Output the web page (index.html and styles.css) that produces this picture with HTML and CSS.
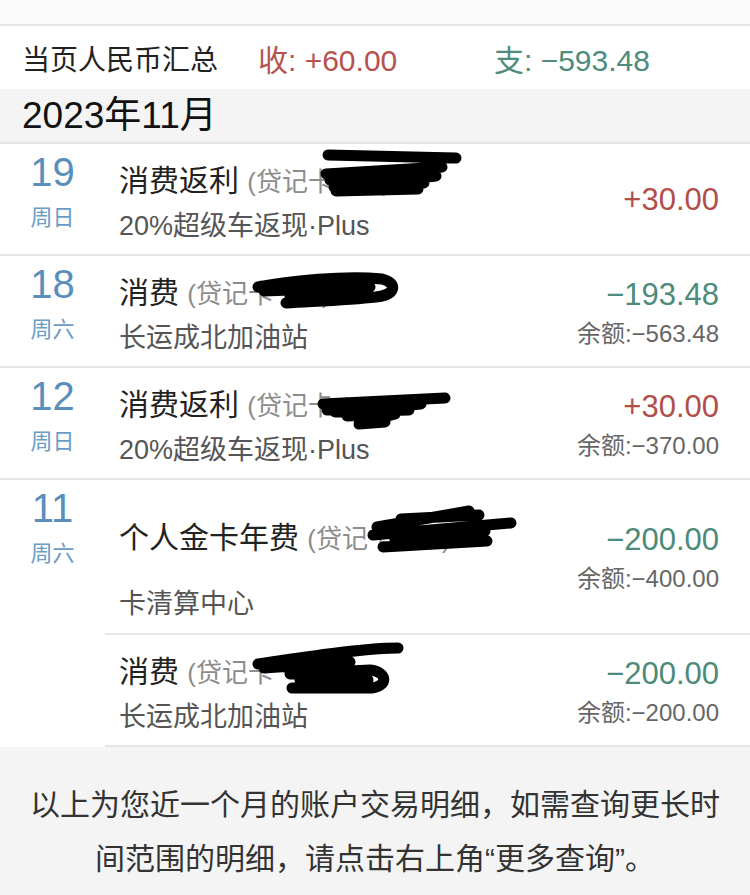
FILE: index.html
```html
<!DOCTYPE html>
<html lang="zh-CN">
<head>
  <meta charset="UTF-8" />
  <meta name="viewport" content="width=device-width, initial-scale=1.0" />
  <title>账户明细</title>
  <link rel="stylesheet" href="styles.css">
</head>
<body>
  <div class="top-strip"></div>

  <div class="summary">
    <span class="summary-label">当页人民币汇总</span>
    <span class="summary-in">收: +60.00</span>
    <span class="summary-out">支: −593.48</span>
  </div>

  <div class="month">2023年11月</div>

  <div class="day-group">
    <div class="date">
      <div class="date-num">19</div>
      <div class="date-week">周日</div>
    </div>
    <div class="entries">
      <div class="entry">
        <div class="entry-main">
          <div class="entry-title">消费返利 <span class="card">(贷记卡 ****)</span>
            <svg class="scribble scribble-1" width="142" height="50" viewBox="0 0 142 50">
              <path d="M8 6 L136 9 M6 25 L122 18 L10 31 L116 27 L14 38 L104 34 L16 42 L98 40" />
            </svg>
          </div>
          <div class="entry-sub">20%超级车返现·Plus</div>
        </div>
        <div class="entry-side solo">
          <div class="amount plus">+30.00</div>
        </div>
      </div>
    </div>
  </div>

  <div class="day-group">
    <div class="date">
      <div class="date-num">18</div>
      <div class="date-week">周六</div>
    </div>
    <div class="entries">
      <div class="entry">
        <div class="entry-main">
          <div class="entry-title">消费 <span class="card">(贷记卡 ****)</span>
            <svg class="scribble scribble-2" width="150" height="42" viewBox="0 0 150 42">
              <path d="M8 20 C40 14, 95 8, 132 12 C148 16, 146 28, 126 30 C100 33, 70 34, 36 36 M14 24 L120 20 L40 30 L110 26" />
            </svg>
          </div>
          <div class="entry-sub">长运成北加油站</div>
        </div>
        <div class="entry-side">
          <div class="amount minus">−193.48</div>
          <div class="balance">余额:−563.48</div>
        </div>
      </div>
    </div>
  </div>

  <div class="day-group">
    <div class="date">
      <div class="date-num">12</div>
      <div class="date-week">周日</div>
    </div>
    <div class="entries">
      <div class="entry">
        <div class="entry-main">
          <div class="entry-title">消费返利 <span class="card">(贷记卡 ****)</span>
            <svg class="scribble scribble-3" width="140" height="40" viewBox="0 0 140 40">
              <path d="M8 14 L130 8 M12 20 L106 14 L20 22 L94 20 M32 26 L80 24 L44 34 L70 32" />
            </svg>
          </div>
          <div class="entry-sub">20%超级车返现·Plus</div>
        </div>
        <div class="entry-side">
          <div class="amount plus">+30.00</div>
          <div class="balance">余额:−370.00</div>
        </div>
      </div>
    </div>
  </div>

  <div class="day-group last">
    <div class="date">
      <div class="date-num">11</div>
      <div class="date-week">周六</div>
    </div>
    <div class="entries">
      <div class="entry tall">
        <div class="entry-main">
          <div class="entry-title">个人金卡年费 <span class="card">(贷记卡 ****)</span>
            <svg class="scribble scribble-4" width="156" height="52" viewBox="0 0 156 52">
              <path d="M12 24 L104 8 M36 16 L114 12 M8 32 L146 20 M24 30 L120 28 L30 38 L110 36 M18 44 L122 38" />
            </svg>
          </div>
          <div class="entry-sub">卡清算中心</div>
        </div>
        <div class="entry-side">
          <div class="amount minus">−200.00</div>
          <div class="balance">余额:−400.00</div>
        </div>
      </div>
      <div class="entry">
        <div class="entry-main">
          <div class="entry-title">消费 <span class="card">(贷记卡 ****)</span>
            <svg class="scribble scribble-5" width="160" height="56" viewBox="0 0 160 56">
              <path d="M8 24 C50 18, 110 8, 148 8 M14 28 L100 22 M40 34 L120 30 C138 32, 138 46, 122 48 L42 48 M50 40 L118 40" />
            </svg>
          </div>
          <div class="entry-sub">长运成北加油站</div>
        </div>
        <div class="entry-side">
          <div class="amount minus">−200.00</div>
          <div class="balance">余额:−200.00</div>
        </div>
      </div>
    </div>
  </div>

  <div class="footer">
    以上为您近一个月的账户交易明细，如需查询更长时<br>间范围的明细，请点击右上角“更多查询”。
  </div>
</body>
</html>
```

FILE: styles.css
```css
body {
  margin: 0;
  padding: 0;
  background-color: #ffffff;
  font-family: "Liberation Sans", "Noto Sans CJK SC", sans-serif;
  color: #222222;
  height: 895px;
  overflow: hidden;
}

.top-strip {
  height: 24px;
  background-color: #fafafa;
  border-bottom: 2px solid #e6e6e6;
}

.summary {
  height: 63px;
  display: grid;
  grid-template-columns: 236px 236px auto;
  align-items: center;
  padding-left: 22px;
  font-size: 28px;
}

.summary-in {
  color: #b6524e;
  font-size: 30px;
}

.summary-out {
  color: #4f8c7c;
  font-size: 30px;
}

.month {
  height: 53px;
  line-height: 53px;
  background-color: #f4f4f4;
  border-bottom: 2px solid #e4e4e4;
  padding-left: 22px;
  font-size: 37px;
  color: #111111;
}

.day-group {
  display: flex;
  border-bottom: 2px solid #e6e6e6;
}

.day-group.last {
  border-bottom: none;
}

.date {
  width: 105px;
  flex-shrink: 0;
  text-align: center;
  padding-top: 6px;
}

.date-num {
  font-size: 40px;
  line-height: 44px;
  color: #5a8ebb;
}

.date-week {
  margin-top: 9px;
  font-size: 22px;
  line-height: 30px;
  color: #6a9bc4;
}

.entries {
  flex: 1;
}

.day-group.last .entries {
  border-bottom: 2px solid #e6e6e6;
}

.entry {
  display: flex;
  justify-content: space-between;
  align-items: flex-start;
  height: 110px;
  box-sizing: border-box;
  padding: 20px 31px 13px 14px;
}

.entries .entry + .entry {
  height: 112px;
  border-top: 2px solid #e6e6e6;
}

.entry.tall {
  height: 153px;
  padding-top: 41px;
  padding-bottom: 15px;
}

.entry-title {
  position: relative;
  font-size: 30px;
  line-height: 34px;
  color: #222222;
  white-space: nowrap;
}

.card {
  font-size: 26px;
  color: #8c8c8c;
}

.entry-sub {
  margin-top: 12px;
  font-size: 27px;
  line-height: 30px;
  color: #555555;
}

.entry.tall .entry-sub {
  margin-top: 33px;
}

.entry-side {
  text-align: right;
  margin-top: 1px;
}

.entry-side.solo {
  margin-top: 18px;
}

.amount {
  font-size: 31px;
  line-height: 36px;
}

.amount.plus {
  color: #b24e4a;
}

.amount.minus {
  color: #4c8a79;
}

.balance {
  margin-top: 6px;
  font-size: 24px;
  line-height: 30px;
  color: #666666;
}

.scribble {
  position: absolute;
}

.scribble path {
  fill: none;
  stroke: #000000;
  stroke-width: 11;
  stroke-linecap: round;
  stroke-linejoin: round;
}

.scribble-1 {
  left: 201px;
  top: -15px;
}

.scribble-2 {
  left: 131px;
  top: -9px;
}

.scribble-3 {
  left: 196px;
  top: 2px;
}

.scribble-4 {
  left: 246px;
  top: -18px;
}

.scribble-5 {
  left: 131px;
  top: -15px;
}

.footer {
  background-color: #f4f4f4;
  box-sizing: border-box;
  height: 148px;
  padding: 31px 20px 0;
  text-align: center;
  font-size: 30px;
  line-height: 54px;
  color: #333333;
}
```
